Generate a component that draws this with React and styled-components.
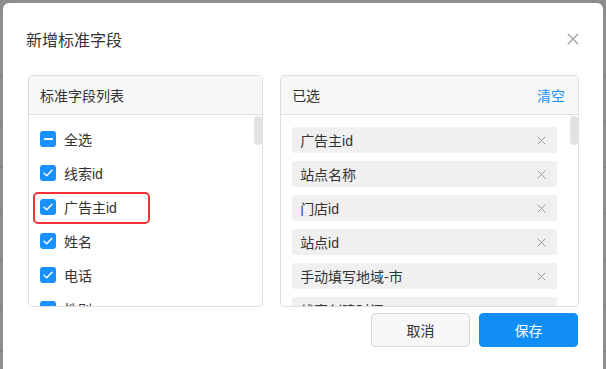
import React from 'react'
import styled, { createGlobalStyle } from 'styled-components';

const Global = createGlobalStyle`
    body{
        margin:0;
        background:#8d8d8d;
        font-family:"Liberation Sans","Noto Sans CJK SC",sans-serif;
    }
`

const fields = [
    { label: '线索id', checked: true },
    { label: '广告主id', checked: true, marked: true },
    { label: '姓名', checked: true },
    { label: '电话', checked: true },
    { label: '性别', checked: true },
]

const picked = ['广告主id', '站点名称', '门店id', '站点id', '手动填写地域-市', '线索创建时间']

function Check({ half }) {
    return (
        <Box>
            {half ? (
                <Bar />
            ) : (
                <svg width="10" height="8" viewBox="0 0 10 8">
                    <path d="M1 4.2 L3.8 6.8 L9 1.2" fill="none" stroke="#fff" strokeWidth="1.4" strokeLinecap="round" strokeLinejoin="round" />
                </svg>
            )}
        </Box>
    )
}

function Cross({ size, color }) {
    return (
        <svg width={size} height={size} viewBox="0 0 10 10">
            <path d="M1 1 L9 9 M9 1 L1 9" stroke={color} strokeWidth="1.1" strokeLinecap="round" />
        </svg>
    )
}

export default function App() {
    return (
        <Page>
            <Global />
            <BgRows>
                {[0, 1, 2, 3, 4, 5, 6].map(i => <BgRow key={i} />)}
            </BgRows>
            <Modal>
                <Header>
                    <Title>新增标准字段</Title>
                    <Cross size={12} color="#a0a0a0" />
                </Header>
                <Panels>
                    <Panel $w={236}>
                        <PanelHead>标准字段列表</PanelHead>
                        <PanelBody>
                            <List>
                                <Item>
                                    <Check half />
                                    <span>全选</span>
                                </Item>
                                {fields.map(f => (
                                    <Item key={f.label}>
                                        <Check />
                                        <span>{f.label}</span>
                                        {f.marked && <Mark />}
                                    </Item>
                                ))}
                            </List>
                            <Thumb $left={226} />
                        </PanelBody>
                    </Panel>
                    <Panel $w={300}>
                        <PanelHead>
                            已选
                            <Clear>清空</Clear>
                        </PanelHead>
                        <PanelBody>
                            <Tags>
                                {picked.map(p => (
                                    <Tag key={p}>
                                        {p}
                                        <Cross size={9} color="#9a9a9a" />
                                    </Tag>
                                ))}
                            </Tags>
                            <Thumb $left={290} />
                        </PanelBody>
                    </Panel>
                </Panels>
                <Footer>
                    <Button>取消</Button>
                    <Button $primary>保存</Button>
                </Footer>
            </Modal>
        </Page>
    )
}

const Page = styled.div`
    position:relative;
    height:369px;
    overflow:hidden;
`
const BgRows = styled.div`
    position:absolute;
    inset:0;
    padding-top:30px;
`
const BgRow = styled.div`
    height:45px;
    border-bottom:1px solid #7f7f7f;
`
const Modal = styled.div`
    position:relative;
    margin:3px 3px 0;
    height:380px;
    background:#fff;
    border-radius:6px;
    padding:0 24px 0 25px;
    box-sizing:border-box;
`
const Header = styled.div`
    display:flex;
    align-items:center;
    justify-content:space-between;
    height:72px;
    padding:0 5px 0 -2px;
`
const Title = styled.div`
    font-size:16px;
    color:#333;
    margin-left:-2px;
`
const Panels = styled.div`
    display:flex;
    gap:17px;
`
const Panel = styled.div`
    width:${p => p.$w}px;
    height:232px;
    border:1px solid #dedede;
    border-radius:4px;
    box-sizing:border-box;
    display:flex;
    flex-direction:column;
    overflow:hidden;
`
const PanelHead = styled.div`
    height:38px;
    flex-shrink:0;
    background:#f7f7f7;
    border-bottom:1px solid #dedede;
    display:flex;
    align-items:center;
    justify-content:space-between;
    padding:0 13px 0 11px;
    font-size:14px;
    color:#333;
`
const Clear = styled.span`
    color:#1890ff;
`
const PanelBody = styled.div`
    position:relative;
    flex:1;
    overflow:hidden;
`
const Thumb = styled.div`
    position:absolute;
    top:1px;
    left:${p => p.$left - 1}px;
    width:8px;
    height:29px;
    border-radius:4px;
    background:#e2e2e2;
`
const List = styled.div`
    padding:7px 0 0 11px;
`
const Item = styled.div`
    position:relative;
    height:34px;
    display:flex;
    align-items:center;
    gap:8px;
    font-size:14px;
    color:#333;
`
const Mark = styled.div`
    position:absolute;
    left:-7px;
    top:2px;
    width:117px;
    height:32px;
    box-sizing:border-box;
    border:2px solid #f5313a;
    border-radius:5px;
`
const Box = styled.div`
    width:16px;
    height:16px;
    border-radius:3px;
    background:#1890ff;
    display:flex;
    align-items:center;
    justify-content:center;
`
const Bar = styled.div`
    width:9px;
    height:2px;
    background:#fff;
`
const Tags = styled.div`
    display:flex;
    flex-direction:column;
    gap:8px;
    padding:12px 0 0 11px;
    width:265px;
`
const Tag = styled.div`
    height:26px;
    flex-shrink:0;
    border-radius:3px;
    background:#f0f0f0;
    display:flex;
    align-items:center;
    justify-content:space-between;
    padding:0 11px 0 8px;
    font-size:14px;
    color:#333;
`
const Footer = styled.div`
    display:flex;
    justify-content:flex-end;
    gap:9px;
    padding:6px 1px 0 0;
`
const Button = styled.button`
    width:99px;
    height:34px;
    border-radius:4px;
    font-family:inherit;
    font-size:14px;
    border:1px solid ${p => (p.$primary ? '#108ef5' : '#d9d9d9')};
    background:${p => (p.$primary ? '#108ef5' : '#f7f7f7')};
    color:${p => (p.$primary ? '#fff' : '#333')};
`
